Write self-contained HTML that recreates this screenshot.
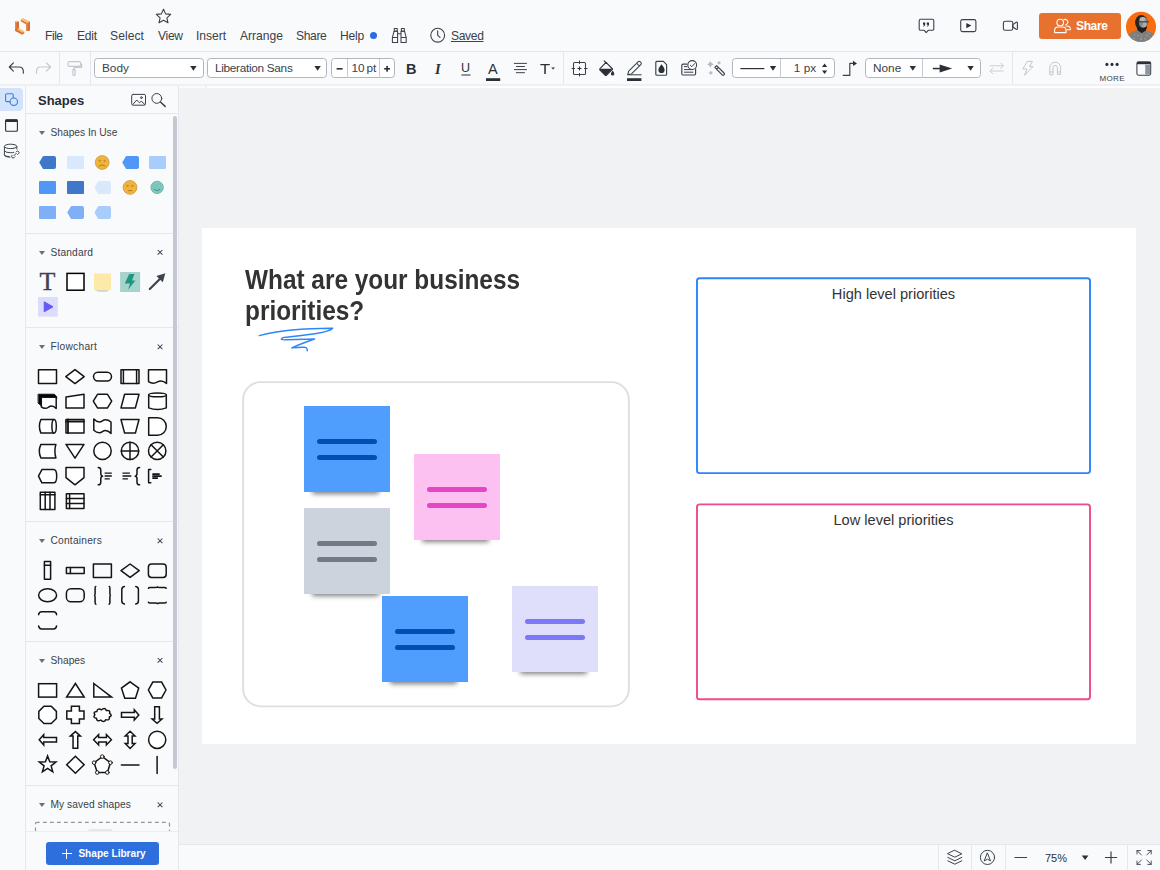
<!DOCTYPE html>
<html lang="en">
<head>
<meta charset="utf-8">
<title>Business priorities - Lucidchart</title>
<style>
*{box-sizing:border-box;margin:0;padding:0}
html,body{width:1160px;height:870px;overflow:hidden}
body{position:relative;background:#f1f2f4;font-family:"Liberation Sans",sans-serif;color:#3a414a;font-size:13px}
.abs{position:absolute}
svg{position:absolute;overflow:visible}
/* top bar */
#topbar{position:absolute;left:0;top:0;width:1160px;height:52px;background:#f9fafc;border-bottom:1px solid #e4e7eb}
#topbar .menu{position:absolute;top:29px;font-size:12.100px;line-height:15px;color:#3a414a;white-space:nowrap}
/* toolbar */
#toolbar{position:absolute;left:0;top:52px;width:1160px;height:32px;background:#f9fafc}
.sel{position:absolute;top:6px;height:20px;border:1px solid #b0b5c0;border-radius:3.5px;background:#fff;font-size:11.800px;line-height:18px;color:#3a414a;white-space:nowrap}
.vsep{position:absolute;top:0;width:1px;height:32px;background:#e4e7eb}
.caret{position:absolute;width:0;height:0;border-left:4px solid transparent;border-right:4px solid transparent;border-top:6px solid #2b3038}
/* left rail */
#rail{position:absolute;left:0;top:85px;width:26px;height:785px;background:#f9fafc;border-right:1px solid #e4e7eb}
/* shapes panel */
#panel{position:absolute;left:26px;top:85px;width:153px;height:785px;background:#f9fafc;border-right:1px solid #e4e7eb;overflow:hidden}
#panel .hdr{position:absolute;left:12px;top:7.5px;font-weight:bold;font-size:13px;line-height:16px;color:#282c33}
.sec{position:absolute;left:24.500px;font-size:10.200px;line-height:13px;color:#3a414a;white-space:nowrap}
.tri{position:absolute;left:13.200px;width:0;height:0;border-left:3px solid transparent;border-right:3px solid transparent;border-top:4.300px solid #667080}
.hr{position:absolute;left:0;width:153px;height:1px;background:#e4e7eb}
.x{position:absolute;left:130px;width:8px;height:8px}
/* canvas */
#page{position:absolute;left:202px;top:228px;width:934px;height:516px;background:#fff}
.sticky{position:absolute;width:86px;height:86px}
.sticky i{position:absolute;left:13px;width:60px;height:5.400px;border-radius:3px}
.sticky i.a{top:32.800px}.sticky i.b{top:49px}
.shadow{position:absolute;height:8px;border-radius:2px;background:rgba(0,0,0,.5);filter:blur(2.800px)}
#bottombar{position:absolute;left:179px;top:844px;width:981px;height:26px;background:#f9fafc;border-top:1px solid #e4e7eb}
</style>
</head>
<body>

<!-- ================= CANVAS ================= -->
<div class="abs" style="left:179px;top:86px;width:26px;height:2px;background:#fafbfc"></div>
<div class="abs" style="left:207px;top:86px;width:953px;height:2px;background:#fff"></div>
<div id="page">
  <div class="abs" id="title" style="left:43px;top:37px;font-weight:bold;font-size:27px;line-height:31px;color:#333;white-space:nowrap;transform:scaleX(.903);transform-origin:0 0">What are your business<br>priorities?</div>
  <svg style="left:0;top:0" width="934" height="516" viewBox="202 228 934 516"><path d="M259.3 335.600 C280 330.500 308 328.200 332.700 328.300 C329 333 306 335 284 337.400 C279.500 339 281 340 286 339.800 C296 339.600 306 339.200 314.500 339 C306 342 298 345 291.700 347.900 C296 347.500 301 347.100 304.600 347.300 C306.800 347.500 307.400 349 307.200 350.800" fill="none" stroke="#2f86f6" stroke-width="1.400" stroke-linecap="round" stroke-linejoin="round"/></svg>
  <!-- rounded container -->
  <svg style="left:0;top:0" width="934" height="516" viewBox="202 228 934 516">
    <rect x="243.100" y="382.200" width="385.800" height="324.100" rx="17.500" fill="none" stroke="#dedede" stroke-width="1.800"/>
    <rect x="697" y="278.200" width="393" height="194.900" rx="2.600" fill="none" stroke="#2b86f7" stroke-width="1.900"/>
    <rect x="697" y="504.400" width="393" height="194.900" rx="2.600" fill="none" stroke="#ee4a8c" stroke-width="1.900"/>
  </svg>
  <!-- stickies -->
  <div class="shadow" style="left:110px;top:258px;width:67px"></div>
  <div class="sticky" style="left:102px;top:178px;background:#4f9dfc"><i class="a" style="background:#0050b3"></i><i class="b" style="background:#0050b3"></i></div>
  <div class="shadow" style="left:220px;top:306px;width:67px"></div>
  <div class="sticky" style="left:212px;top:226px;background:#fdc1f1"><i class="a" style="background:#e645c3"></i><i class="b" style="background:#e645c3"></i></div>
  <div class="shadow" style="left:110px;top:360px;width:67px"></div>
  <div class="sticky" style="left:102px;top:280px;background:#ccd3dc"><i class="a" style="background:#727a87"></i><i class="b" style="background:#727a87"></i></div>
  <div class="shadow" style="left:188px;top:448px;width:67px"></div>
  <div class="sticky" style="left:180px;top:368px;background:#4f9dfc"><i class="a" style="background:#0050b3"></i><i class="b" style="background:#0050b3"></i></div>
  <div class="shadow" style="left:318px;top:438px;width:67px"></div>
  <div class="sticky" style="left:310px;top:358px;background:#dfdffc"><i class="a" style="background:#7d78f5"></i><i class="b" style="background:#7d78f5"></i></div>
  <!-- priority boxes -->
  <div class="abs" style="left:494px;top:57.500px;width:395px;text-align:center;font-size:14.600px;line-height:17px;color:#333">High level priorities</div>
  <div class="abs" style="left:494px;top:283.500px;width:395px;text-align:center;font-size:14.600px;line-height:17px;color:#333">Low level priorities</div>
</div>

<!-- ================= TOP BAR ================= -->
<div id="topbar">
  <span class="menu" style="left:45px;letter-spacing:-0.47px">File</span>
  <span class="menu" style="left:77px;letter-spacing:-0.25px">Edit</span>
  <span class="menu" style="left:110px;letter-spacing:0.07px">Select</span>
  <span class="menu" style="left:158px;letter-spacing:-0.30px">View</span>
  <span class="menu" style="left:196px;letter-spacing:-0.05px">Insert</span>
  <span class="menu" style="left:240px">Arrange</span>
  <span class="menu" style="left:296px;letter-spacing:-0.36px">Share</span>
  <span class="menu" style="left:340px;letter-spacing:-0.22px">Help</span>
  <span class="menu" style="left:451px;text-decoration:underline;text-underline-offset:1px;letter-spacing:-.36px">Saved</span>
  <div class="abs" style="left:370px;top:32px;width:7px;height:7px;border-radius:4px;background:#2d6be0"></div>
  <div class="abs" id="sharebtn" style="left:1039px;top:13px;width:82px;height:26px;border-radius:3px;background:#e87130;color:#fff;font-weight:bold;font-size:12px;line-height:26px;padding-left:37px;letter-spacing:-0.36px">Share</div>
  <svg style="left:0;top:0" width="1160" height="52" viewBox="0 0 1160 52">
    <defs>
      <linearGradient id="lg1" x1="0" y1="0" x2="1" y2="1"><stop offset="0" stop-color="#f59a4b"/><stop offset="1" stop-color="#e0641f"/></linearGradient>
      <clipPath id="avc"><circle cx="1141" cy="26.800" r="15.050"/></clipPath>
    </defs>
    <!-- logo -->
    <g>
      <path d="M15.100 21.500 H18.800 V29.800 L15.100 30.400 Z" fill="#e57a36"/>
      <path d="M17.300 21.500 H18.800 V29.800 L17.300 29.600 Z" fill="#cf682c"/>
      <ellipse cx="16.950" cy="21.500" rx="1.850" ry=".800" fill="#fbbd6e"/>
      <path d="M15.100 29.600 L17 29.200 L22.600 32.400 L24.300 31.400 V32.900 L22.500 34.700 L15.100 30.900 Z" fill="#e26b27"/>
      <path d="M16.900 29.300 L19 28.300 L24.300 31.300 L22.500 32.700 Z" fill="#fbbd6e"/>
      <path d="M26.100 22.300 L29.800 21.600 V30.200 Q28 31.500 26.100 30.900 Z" fill="#e57a36"/>
      <path d="M28.400 21.900 L29.800 21.600 V30.200 L28.400 30.800 Z" fill="#cf682c"/>
      <path d="M20.800 19.400 L26.100 22.300 V24.300 L20.800 21.300 Z" fill="#e26b27"/>
      <path d="M20.800 19.400 L22.800 17.900 L29.800 21.600 L27.800 23.200 L26.100 22.300 Z" fill="#fbbd6e"/>
    </g>
    <!-- star -->
    <path d="M163.5 9.2 L165.6 13.9 L170.7 14.4 L166.9 17.8 L168 22.8 L163.5 20.2 L159 22.8 L160.1 17.8 L156.3 14.4 L161.4 13.9 Z" fill="none" stroke="#3a414a" stroke-width="1.1" stroke-linejoin="round"/>
    <!-- binoculars -->
    <g fill="none" stroke="#3a414a" stroke-width="1.050" stroke-linejoin="round">
      <path d="M394.300 28.400 h2.900 v2.800 h-2.900 z M401.400 28.400 h2.900 v2.800 h-2.900 z"/>
      <path d="M394.100 31.200 h3.500 v11.200 h-5.200 v-5 z M401 31.200 h3.500 l1.700 6.200 v5 h-5.200 z"/>
      <path d="M392.400 37.400 h5.200 M401 37.400 h5.200 M397.600 33.800 h3.400"/>
    </g>
    <!-- clock -->
    <circle cx="437.7" cy="35.2" r="6.9" fill="none" stroke="#3a414a" stroke-width="1.1"/>
    <path d="M437.7 30.8 V35.4 L440 37.4" fill="none" stroke="#3a414a" stroke-width="1.1" stroke-linecap="round" stroke-linejoin="round"/>
    <!-- comment -->
    <path d="M920.6 19.3 h11.8 a1.4 1.4 0 0 1 1.4 1.4 v8.2 a1.4 1.4 0 0 1 -1.4 1.4 h-4.2 l-2 2.3 l-2 -2.3 h-3.6 a1.4 1.4 0 0 1 -1.4 -1.4 v-8.2 a1.4 1.4 0 0 1 1.4 -1.4 z" fill="none" stroke="#3a414a" stroke-width="1.1" stroke-linejoin="round"/>
    <path d="M923 22.6 h2.2 v2 q0 1.6 -1.7 2.1 l-0.3 -0.6 q0.9 -0.5 0.9 -1.4 h-1.1 z M926.8 22.6 h2.2 v2 q0 1.6 -1.7 2.1 l-0.3 -0.6 q0.9 -0.5 0.9 -1.4 h-1.1 z" fill="#2b3038"/>
    <!-- play -->
    <rect x="960.7" y="19.6" width="15.2" height="12" rx="1.8" fill="none" stroke="#3a414a" stroke-width="1.1"/>
    <path d="M966.3 22.9 L971.4 25.6 L966.3 28.3 Z" fill="#2b3038"/>
    <!-- video -->
    <rect x="1003.4" y="21.3" width="9.4" height="9" rx="1.8" fill="none" stroke="#3a414a" stroke-width="1.1"/>
    <path d="M1012.8 24.6 L1016.2 22.3 Q1017.4 21.8 1017.4 23 V28.6 Q1017.4 29.8 1016.2 29.3 L1012.8 27 Z" fill="none" stroke="#3a414a" stroke-width="1.1" stroke-linejoin="round"/>
    <!-- share people icon -->
    <g fill="none" stroke="#fff" stroke-width="1.1" stroke-linejoin="round">
      <circle cx="1060.2" cy="22.5" r="3.3"/>
      <path d="M1054.6 32.6 v-2.2 a3.4 3.4 0 0 1 3.4 -3.4 h4.6 a3.4 3.4 0 0 1 3.4 3.4 v2.2 z"/>
      <path d="M1063.6 20 a2.6 2.6 0 1 1 1.6 4.6"/>
      <path d="M1065.6 26 h1.4 a3.4 3.4 0 0 1 3.4 3.4 v0.4 h-4"/>
    </g>
    <!-- avatar -->
    <circle cx="1141" cy="26.800" r="15.050" fill="#f96d10"/>
    <g clip-path="url(#avc)">
      <path d="M1125 43 V36.200 L1137.200 29.600 L1141.600 32.800 L1146.200 30.200 L1157 35 V43 Z" fill="#7e7e7e"/>
      <path d="M1129 36 l2 1 M1133 38 l2 .6 M1137 35 l1.600 1.200 M1146 36 l2 -.6 M1150 37.400 l2 .4 M1140 39 l2 .4 M1134 34.600 l1.400 .8 M1148.500 33.400 l1.600 .6 M1144 38.600 l1.600 .6 M1131.500 40 l2 .4 M1152 35.200 l1.400 .6" stroke="#a8a8a8" stroke-width=".9" fill="none"/>
      <path d="M1141.400 33 v6.500" stroke="#9a9a9a" stroke-width=".7"/>
      <path d="M1137.400 27 L1146.600 27 L1146 30.600 L1141.600 33.200 L1137.400 30 Z" fill="#222"/>
      <ellipse cx="1141.300" cy="22.600" rx="6.200" ry="7.500" fill="#262626"/>
      <ellipse cx="1143.200" cy="22.400" rx="4.300" ry="5.400" fill="#858585"/>
      <ellipse cx="1142.600" cy="19.200" rx="2.900" ry="2.100" fill="#b4b4b4"/>
      <ellipse cx="1144.600" cy="24" rx="2" ry="1.400" fill="#b0b0b0"/>
      <path d="M1137 27 Q1138.500 32.400 1143 31.200 Q1146.800 30 1147.200 26.600 Q1144 29 1140.600 27.800 Z" fill="#1a1a1a"/>
      <path d="M1138.600 21.800 h10.400" stroke="#2a2a2a" stroke-width=".8"/>
      <path d="M1142 25.800 q2 1 4 0" stroke="#e0e0e0" stroke-width=".7" fill="none"/>
    </g>
  </svg>
</div>

<!-- ================= TOOLBAR ================= -->
<div id="toolbar">
  <div class="vsep" style="left:59px"></div>
  <div class="vsep" style="left:90px"></div>
  <div class="vsep" style="left:563px"></div>
  <div class="vsep" style="left:1012px"></div>
  <div class="sel" style="left:94px;width:110px;padding-left:7px">Body</div>
  <div class="sel" style="left:207px;width:120px;padding-left:7px;letter-spacing:-.3px">Liberation Sans</div>
  <div class="sel" style="left:331px;width:64px"><span class="abs" style="left:19.500px;top:0;font-size:11.800px">10</span><span class="abs" style="left:34.500px;top:0;font-size:11.800px">pt</span>
    <i class="abs" style="left:15px;top:0;width:1px;height:19px;background:#c5cad1"></i><i class="abs" style="left:47px;top:0;width:1px;height:19px;background:#c5cad1"></i></div>
  <div class="sel" style="left:731.500px;width:103px"><span class="abs" style="left:61.300px;top:0">1 px</span><i class="abs" style="left:47px;top:0;width:1px;height:19px;background:#c5cad1"></i></div>
  <div class="sel" style="left:865px;width:116px;padding-left:7px">None<i class="abs" style="left:56px;top:0;width:1px;height:19px;background:#c5cad1"></i></div>
  <span class="abs" style="left:406px;top:8.500px;font-weight:bold;font-size:14.500px;line-height:16px;color:#2b3038">B</span>
  <span class="abs" style="left:435px;top:8.500px;font-family:'Liberation Serif',serif;font-style:italic;font-weight:bold;font-size:14.500px;line-height:16px;color:#2b3038">I</span>
  <span class="abs" style="left:461px;top:9px;font-size:12.500px;line-height:14px;color:#2b3038">U</span>
  <span class="abs" style="left:488px;top:8.500px;font-size:14.500px;line-height:16px;color:#2b3038">A</span>
  <span class="abs" style="left:540.300px;top:8.800px;font-size:14px;line-height:16px;color:#2b3038;transform:scaleX(1.180);transform-origin:0 0">T</span>
  <span class="abs" style="left:1099.5px;top:22px;font-size:8px;line-height:10px;letter-spacing:.35px;color:#3a414a">MORE</span>
  <svg style="left:0;top:0" width="1160" height="33" viewBox="0 52 1160 33">
    <g fill="none" stroke="#3a414a" stroke-width="1.15" stroke-linecap="round" stroke-linejoin="round">
      <!-- undo -->
      <path d="M13.4 62.8 L9.3 67 L13.4 71.2 M9.6 67 H19 Q23.3 67 23.3 71.4 V73.2"/>
      <!-- redo (light) -->
      <path d="M46.4 62.8 L50.5 67 L46.4 71.2 M50.2 67 H40.8 Q36.5 67 36.5 71.4 V73.2" stroke="#c3c7ce"/>
      <!-- paint roller (light) -->
      <path d="M69.6 61.6 h9.4 a1.6 1.6 0 0 1 1.6 1.6 v1.6 a1.6 1.6 0 0 1 -1.6 1.6 h-9.4 a1.6 1.6 0 0 1 -1.6 -1.6 v-1.6 a1.6 1.6 0 0 1 1.6 -1.6 z M80.6 64 h1 v3.4 h-7.6 v2.2 M72.9 69.6 h2.2 v5 a1.1 1.1 0 0 1 -2.2 0 z" stroke="#c3c7ce"/>
      <!-- underline bar for U -->
      <path d="M461.8 75 h8.3" stroke="#2b3038" stroke-width="1"/>
      <!-- align -->
      <path d="M514.3 63.4 h12.2 M516.3 66.5 h8.2 M514.3 69.6 h12.2 M516.3 72.7 h8.2" stroke-width="1"/>
      <!-- shape target -->
      <rect x="573.500" y="62.500" width="12" height="12" rx="1.100" stroke-width="1.050"/>
      <path d="M579.500 60.500 v3.500 M579.500 73 v3.500 M571.500 68.500 h3.500 M584 68.500 h3.500" stroke-width="1" stroke-linecap="butt"/><path d="M577.500 68.500 h4 M579.500 66.500 v4" stroke-width="1" stroke-linecap="butt" stroke="#2b3038"/>
      <!-- pen -->
      <path d="M627.600 74.800 h13.600" stroke-width="1"/>
      <path d="M627.800 74.400 l0.900 -3.300 l9.300 -9.300 a1.600 1.600 0 0 1 2.300 0 l0.500 0.500 a1.600 1.600 0 0 1 0 2.300 l-9.300 9.300 z M636.600 63.200 l2.800 2.800" stroke-width="1.050"/>
      <!-- page with drop -->
      <path d="M656.8 61.4 h6.6 l3.2 3.2 v9.6 a1 1 0 0 1 -1 1 h-8.8 a1 1 0 0 1 -1 -1 v-11.8 a1 1 0 0 1 1 -1 z"/>
      <!-- checklist -->
      <path d="M686.6 64.2 h-3.6 a1.2 1.2 0 0 0 -1.2 1.2 v8.4 a1.2 1.2 0 0 0 1.2 1.2 h11.4 a1.2 1.2 0 0 0 1.2 -1.2 v-5"/>
      <path d="M684.4 66.6 h2.4 M684.4 69.6 h8.4 M684.4 72.2 h8.4" stroke-width="1"/>
      <circle cx="692.200" cy="65" r="4.400" fill="#f9fafc" stroke-width="1.050"/>
      <path d="M690.300 65.200 l1.500 1.500 l2.800 -3.100" stroke-width="1"/>
      <!-- wand -->
      <path d="M714.8 67.4 l1.8 -1.8 l7.4 7.4 a1.2 1.2 0 0 1 0 1.8 a1.2 1.2 0 0 1 -1.8 0 z M716.6 69.2 l1.8 -1.8"/>
      <!-- corner arrow -->
      <path d="M843.2 75.4 h6.6 v-12 h3.6"/>
      <!-- swap (light) -->
      <path d="M990 65.800 h13.400 M1000.600 63 l2.800 2.800 l-2.800 2.800 M1003.400 71 h-13.400 M992.800 68.200 l-2.800 2.800 l2.800 2.800" stroke="#cbcfd5" stroke-width="1"/>
      <!-- lightning (light) -->
      <path d="M1027.6 61.4 h4.8 l-2.8 5.2 h3.4 l-8.4 8.6 l2.4 -6.2 h-3.8 z" stroke="#c3c7ce" stroke-width="1"/>
      <!-- magnet (light) -->
      <path d="M1049.8 74.4 v-6.8 a5.4 5.4 0 0 1 10.8 0 v6.8 h-3.2 v-6.8 a2.2 2.2 0 0 0 -4.4 0 v6.8 z M1049.8 72 h3.2 M1057.4 72 h3.2" stroke="#c3c7ce" stroke-width="1"/>
      <!-- panel icon -->
      <rect x="1136.900" y="61.800" width="13.800" height="13.400" rx="1.600" stroke-width="1.050"/>
    </g>
    <!-- fills -->
    <g fill="#2b3038">
      <path d="M190.2 66 h6.4 l-3.2 4.7 z"/>
      <path d="M314.4 66 h6.4 l-3.2 4.7 z"/>
      <path d="M769.8 66 h6.4 l-3.2 4.7 z"/>
      <path d="M909.6 66 h6.4 l-3.2 4.7 z"/>
      <path d="M967.4 66 h6.4 l-3.2 4.7 z"/>
      <path d="M551.2 67.4 h3.8 l-1.9 2.2 z"/>
      <rect x="336.6" y="68" width="6" height="1.6"/>
      <rect x="384.2" y="68" width="5.8" height="1.6"/><rect x="386.3" y="65.9" width="1.6" height="5.8"/>
      <rect x="486" y="78.2" width="14.2" height="2.8"/>
      <rect x="627" y="78.2" width="14.4" height="2.8"/>
      <rect x="740.4" y="68" width="24" height="1.2"/>
      <path d="M822 67 h5.2 l-2.6 -3.4 z M822 70.6 h5.2 l-2.6 3.4 z"/>
      <path d="M853 60.8 l4 2.6 l-4 2.6 z"/>
      <rect x="932.8" y="67.8" width="9" height="1.5"/>
      <path d="M939.6 64.6 l12.6 3.9 l-12.6 3.9 z"/>
      <circle cx="1106.9" cy="64.4" r="1.55"/><circle cx="1112" cy="64.4" r="1.55"/><circle cx="1117.1" cy="64.4" r="1.55"/>
      <rect x="1137" y="62" width="13.600" height="2.200"/>
      <path d="M661.500 64.300 q3.100 3.700 3.100 5.600 a3.100 3.100 0 0 1 -6.200 0 q0 -1.900 3.100 -5.600 z"/>
      <!-- bucket -->
      <path d="M600 68.6 L606 62.4 L612.6 69 L606.6 75.2 Q605.8 75.9 605 75.2 L600 70.2 Q599.3 69.4 600 68.6 Z" fill="none" stroke="#2b3038" stroke-width="1.1" stroke-linejoin="round"/>
      <path d="M600.3 68.8 H612.4 L606.6 74.9 Q605.8 75.6 605 74.9 L600.2 70.1 Q599.7 69.4 600.3 68.8 Z"/>
      <path d="M604.2 60.8 l2.2 2.2" fill="none" stroke="#2b3038" stroke-width="1.1" stroke-linecap="round"/>
      <path d="M612.6 70.6 q1.7 2.2 1.7 3.3 a1.7 1.7 0 0 1 -3.4 0 q0 -1.1 1.7 -3.3 z"/>
    </g>
    <rect x="1145.2" y="64.6" width="4.9" height="10" fill="#8e949d"/>
    <rect x="599.4" y="78.2" width="14.6" height="2.8" fill="#fff"/>
    <!-- wand sparkles -->
    <g fill="#b4b8bf">
      <path d="M710.4 60.90 Q711.15 63.55 713.80 64.3 Q711.15 65.05 710.4 67.70 Q709.65 65.05 707.00 64.3 Q709.65 63.55 710.4 60.90 Z"/>
      <path d="M719 60.80 Q719.46 62.44 721.10 62.9 Q719.46 63.36 719 65.00 Q718.54 63.36 716.90 62.9 Q718.54 62.44 719 60.80 Z"/>
      <path d="M710.8 70.60 Q711.31 72.39 713.10 72.9 Q711.31 73.41 710.8 75.20 Q710.29 73.41 708.50 72.9 Q710.29 72.39 710.8 70.60 Z"/>
    </g>
  </svg>
</div>

<!-- ================= LEFT RAIL ================= -->
<div id="rail">
  <div class="abs" style="left:0;top:3.300px;width:23px;height:22.700px;border-radius:0 4px 4px 0;background:#d3e3fc"></div>
  <svg style="left:0;top:0" width="26" height="100" viewBox="0 85 26 100">
    <g fill="none" stroke-linejoin="round">
      <rect x="5.6" y="93.7" width="7.6" height="7.9" rx="1.2" stroke="#3b7de0" stroke-width="1.1"/>
      <circle cx="13.8" cy="101.7" r="3.7" fill="#d3e3fc" stroke="#3b7de0" stroke-width="1.1"/>
      <rect x="5.6" y="119.8" width="11.8" height="11.4" rx="1" stroke="#2b3038" stroke-width="1.1"/>
      <rect x="5.6" y="119.4" width="11.8" height="2.6" fill="#2b3038"/>
      <g stroke="#3a414a" stroke-width="1">
        <ellipse cx="10.6" cy="146.4" rx="6.2" ry="2.2"/>
        <path d="M4.400 146.4 v8.400 q0 2.2 6 2.3 M16.8 146.4 v3 M4.400 150.6 q0.400 2 6.2 2.100 q2 0 3.600 -0.400 M4.400 154.600 q0.400 2 5 2.100"/>
        <path d="M12.700 154.800 l-0.800 0.800 a1.500 1.500 0 0 0 2.100 2.100 l1.300 -1.300 M15.800 152.200 l0.800 -0.800 a1.500 1.500 0 0 1 2.100 2.100 l-1.300 1.300 M13.800 155.800 l2.700 -2.700"/>
      </g>
    </g>
  </svg>
</div>

<!-- ================= SHAPES PANEL ================= -->
<div id="panel">
  <div class="hdr">Shapes</div>
  <div class="hr" style="top:28px;width:153px"></div>
  <div class="abs" style="left:147.300px;top:30.500px;width:3.600px;height:653px;border-radius:2px;background:#c5c8d0;z-index:3"></div>

  <div class="tri" style="top:45.500px"></div><div class="sec" style="top:40.800px">Shapes In Use</div>
  <div class="hr" style="top:148px"></div>
  <div class="tri" style="top:165.600px"></div><div class="sec" style="top:160.800px;letter-spacing:.16px">Standard</div>
  <div class="hr" style="top:242px"></div>
  <div class="tri" style="top:260.100px"></div><div class="sec" style="top:255.300px;letter-spacing:.27px">Flowchart</div>
  <div class="hr" style="top:436px"></div>
  <div class="tri" style="top:454.100px"></div><div class="sec" style="top:449.300px;letter-spacing:.22px">Containers</div>
  <div class="hr" style="top:556px"></div>
  <div class="tri" style="top:573.600px"></div><div class="sec" style="top:568.800px">Shapes</div>
  <div class="hr" style="top:700px"></div>
  <div class="tri" style="top:718.100px"></div><div class="sec" style="top:713.300px;letter-spacing:.07px">My saved shapes</div>
  <svg style="left:0;top:0" width="153" height="785" viewBox="26 85 153 785"><rect x="35.500" y="822.300" width="134" height="40" rx="1.500" fill="none" stroke="#8d949e" stroke-width="1.200" stroke-dasharray="3.700 3.300" stroke-dashoffset="1"/></svg>
  <div class="abs" style="left:62px;top:743.500px;width:25px;height:6px;border-radius:3px;background:#e6e8ec"></div>
  <span class="abs" id="stdT" style="left:13.500px;top:182px;font-family:'Liberation Serif',serif;font-size:26px;line-height:30px;color:#3d4350;-webkit-text-stroke:.35px #3d4350">T</span>
  <!-- panel icon svg: global coords -->
  <svg style="left:0;top:0" width="153" height="785" viewBox="26 85 153 785">
    <!-- header icons -->
    <g fill="none" stroke="#3a414a" stroke-width="1" stroke-linejoin="round" stroke-linecap="round">
      <rect x="131.700" y="94.400" width="13.800" height="10.800" rx="1.400"/>
      <path d="M133 104.200 l3.800 -4.200 l2.600 2.800 l1.800 -1.600 l3.400 3"/>
      <circle cx="141.400" cy="97.600" r="0.900"/>
      <circle cx="156.800" cy="98.400" r="4.900"/>
      <path d="M160.400 102 l4.800 4.400" stroke-width="1.450"/>
    </g>
    <!-- close x's -->
    <g stroke="#3a414a" stroke-width="1.050" stroke-linecap="butt">
      <path d="M157.700 250.0 l4.700 4.700 M162.400 250.0 l-4.700 4.700"/>
      <path d="M157.700 344.5 l4.700 4.700 M162.400 344.5 l-4.700 4.700"/>
      <path d="M157.700 538.5 l4.700 4.700 M162.400 538.5 l-4.700 4.700"/>
      <path d="M157.700 658.0 l4.700 4.700 M162.400 658.0 l-4.700 4.700"/>
      <path d="M157.700 802.5 l4.700 4.700 M162.400 802.5 l-4.700 4.700"/>
    </g>
    <!-- Shapes in use -->
    <g>
      <path d="M39.200 162.500 L42.800 156.600 Q43.100 156 43.800 156 H54 Q56 156 56 158 V167 Q56 169 54 169 H43.800 Q43.100 169 42.800 168.400 Z" fill="#3f78c9"/>
      <rect x="67" y="156" width="17" height="13" rx="1" fill="#d9e8fd"/>
      <path d="M122.200 162.500 L125.800 156.600 Q126.100 156 126.800 156 H137 Q139 156 139 158 V167 Q139 169 137 169 H126.800 Q126.100 169 125.800 168.400 Z" fill="#5097f7"/>
      <rect x="149" y="156" width="17" height="13" rx="1" fill="#a9cdfb"/>
      <rect x="39" y="181" width="17" height="13" rx="1" fill="#5097f7"/>
      <rect x="67" y="181" width="17" height="13" rx="1" fill="#3f78c9"/>
      <path d="M94.400 187.500 L98 181.600 Q98.300 181 99 181 H109 Q111 181 111 183 V192 Q111 194 109 194 H99 Q98.300 194 98 193.400 Z" fill="#d9e8fd"/>
      <rect x="39" y="206" width="17" height="13" rx="1" fill="#7fb0f7"/>
      <path d="M67.200 212.500 L70.800 206.600 Q71.100 206 71.800 206 H82 Q84 206 84 208 V217 Q84 219 82 219 H71.800 Q71.100 219 70.800 218.400 Z" fill="#7fb0f7"/>
      <path d="M94.400 212.500 L98 206.600 Q98.300 206 99 206 H109 Q111 206 111 208 V217 Q111 219 109 219 H99 Q98.300 219 98 218.400 Z" fill="#a9cdfb"/>
      <!-- faces -->
      <circle cx="102.200" cy="162.500" r="6.900" fill="#f0b43c" stroke="#c99a3c" stroke-width=".8"/>
      <circle cx="99.800" cy="160.800" r="1.150" fill="#c08a2a"/><circle cx="104.600" cy="160.800" r="1.150" fill="#c08a2a"/>
      <path d="M98.800 166.300 q3.400 -3 6.800 0" fill="none" stroke="#b57c1c" stroke-width="1"/>
      <circle cx="130" cy="187.400" r="6.900" fill="#f0b43c" stroke="#c99a3c" stroke-width=".8"/>
      <circle cx="127.600" cy="185.800" r="1.150" fill="#c08a2a"/><circle cx="132.400" cy="185.800" r="1.150" fill="#c08a2a"/>
      <path d="M127.800 190.600 h4.400" fill="none" stroke="#b57c1c" stroke-width="1"/>
      <circle cx="157.100" cy="187.400" r="6.200" fill="#7ec8bd" stroke="#68aaa0" stroke-width=".8"/>
      <circle cx="154.900" cy="185.800" r="1.100" fill="#a8ddd5" stroke="#5fa99e" stroke-width=".5"/><circle cx="159.300" cy="185.800" r="1.100" fill="#a8ddd5" stroke="#5fa99e" stroke-width=".5"/>
      <path d="M154 189.200 q3.100 3 6.200 0" fill="none" stroke="#458f84" stroke-width="1"/>
    </g>
    <!-- Standard -->
    <g>
      <rect x="67" y="273.400" width="17" height="16.800" fill="#fff" stroke="#000" stroke-width="1.500"/>
      <ellipse cx="102.500" cy="290.600" rx="6.500" ry="1.200" fill="#cfcfcf"/>
      <rect x="94" y="273.400" width="17" height="16.800" fill="#fdeaa8"/>
      <rect x="120.100" y="272" width="20" height="20" fill="#a6d3cb"/>
      <path d="M129.200 274 H134.400 L132 280.600 H135.400 L128 289.800 L130 283.400 H124.800 Z" fill="#1f9680"/>
      <path d="M149.800 289 L160.600 278.200" stroke="#3b4250" stroke-width="2.200" stroke-linecap="round"/>
      <path d="M165.300 273.300 L162.800 282.300 L156.400 276 Z" fill="#3b4250"/>
      <rect x="38" y="297" width="19.800" height="19.600" fill="#dcdcfc"/>
      <path d="M44.200 301.800 L53 306.800 L44.200 311.800 Z" fill="#6659f5" stroke="#6659f5" stroke-width="1" stroke-linejoin="round"/>
    </g>
    <!--GEN-START-->
    <!-- Flowchart -->
    <g fill="#fff" stroke="#151515" stroke-width="1.5" stroke-linejoin="round" stroke-linecap="round">
      <rect x="38.5" y="369.8" width="18" height="13.6"/>
      <path d="M65.8 376.6 L75 369.6 L84.2 376.6 L75 383.6 Z"/>
      <rect x="93.5" y="372.2" width="18" height="8.8" rx="4.4"/>
      <rect x="121" y="369.8" width="18" height="13.6"/><path d="M123.4 369.8 v13.6 M136.6 369.8 v13.6"/>
      <path d="M148.5 369.8 H166.5 V383.4 Q162 379.4 157.5 381.8 Q153 384.6 148.5 381.6 Z"/>
      <path d="M38.400 394.200 H54.300 L56.700 396.600 V399 H41.400 V405.800 L38.400 403.400 Z" fill="#000" stroke="#000" stroke-width=".8"/><path d="M41.3 397.3 H56.2 V408.6 Q52.48 404.6 48.75 407 Q45.02 409.8 41.3 406.8 Z"/>
      <path d="M66 396.9 L84 394.3 V407.9 H66 Z"/>
      <path d="M93.3 401.1 L97.5 394.3 H107.5 L111.7 401.1 L107.5 407.9 H97.5 Z"/>
      <path d="M124.6 394.3 H139 L135.4 407.9 H121 Z"/>
      <path d="M148.7 394.9 V407.9 Q157.5 411.1 166.3 407.9 V394.9"/><ellipse cx="157.5" cy="394.9" rx="8.8" ry="1.8"/>
      <path d="M54.1 419.5 H40.9 Q37.9 426.3 40.9 433.1 H54.1"/><ellipse cx="54.1" cy="426.3" rx="2.2" ry="6.8"/>
      <rect x="66" y="419.5" width="18" height="13.6"/><path d="M68 419.5 v13.6 M66 421.5 h18" stroke-width="1.8"/>
      <path d="M93.800 419 Q96.500 421.900 99.300 421.900 C102.400 421.900 102.400 419.700 105.400 419.700 Q108.200 419.700 111 422 V433.400 Q108.200 430.600 105.400 430.600 C102.400 430.600 102.400 432.700 99.300 432.700 Q96.500 432.700 93.800 430.300 Z"/>
      <path d="M121 419.5 H139 L135.4 433.1 H124.6 Z"/>
      <path d="M148.7 417.7 H157.5 A8.8 8.8 0 0 1 157.5 435.3 H148.7 Z"/>
      <path d="M55.9 444.4 H40.9 Q37.7 451.2 40.9 458 H55.9 Q53.9 451.2 55.9 444.4 Z"/>
      <path d="M66 444.4 H84 L75 458.2 Z"/>
      <circle cx="102.5" cy="450.9" r="8.7"/>
      <circle cx="130" cy="450.9" r="8.7"/><path d="M121.3 450.9 h17.4 M130 442.2 v17.4"/>
      <circle cx="157.2" cy="450.9" r="8.7"/><path d="M151.05 444.75 l12.3 12.3 M163.35 444.75 l-12.3 12.3"/>
      <path d="M38.5 476.2 L41.9 469.6 H53.5 Q56.7 469.6 56.7 476.2 Q56.7 482.8 53.5 482.8 H41.9 Z"/>
      <path d="M66 467.4 H84 V477.6 L75 484.8 L66 477.6 Z"/>
      <path fill="none" d="M98.200 467.6 q2.600 0 2.600 2.600 v3.400 q0 2.400 1.800 2.600 q-1.800 0.200 -1.800 2.600 v3.400 q0 2.600 -2.600 2.600"/><path d="M104.600 473.2 h7.200 M104.600 476 h7.200 M104.600 478.8 h5.200" stroke-width="1.300" stroke-linecap="butt"/>
      <path fill="none" d="M139.600 467.6 q-2.600 0 -2.600 2.600 v3.400 q0 2.400 -1.800 2.600 q1.800 0.200 1.800 2.600 v3.400 q0 2.600 2.600 2.600"/><path d="M122.500 473.2 h7.400 M122.500 476 h8.800 M122.500 478.8 h5.400" stroke-width="1.300" stroke-linecap="butt"/>
      <path fill="none" d="M150.800 469.4 h-2.200 v13.400 h2.200"/><path d="M152.300 474.1 h7.400 M152.300 476.1 h9.400 M152.300 478.1 h5.600" stroke-width="1.700" stroke-linecap="butt"/>
      <rect x="40.300" y="492.2" width="14.600" height="17.400"/><path d="M45.200 492.2 v17.400 M50 492.2 v17.400 M40.300 494.8 h14.600"/>
      <rect x="66.400" y="493.8" width="17.600" height="14.600"/><path d="M66.400 498.6 h17.600 M66.400 503.4 h17.600 M69.600 493.8 v14.600"/>
    </g>
    <!-- Containers -->
    <g fill="none" stroke="#151515" stroke-width="1.5" stroke-linejoin="round" stroke-linecap="round">
      <rect x="44.400" y="561.6" width="6.200" height="17.600"/><path d="M44.400 565.3 h6.200"/>
      <rect x="66.400" y="567.6" width="17.800" height="6"/><path d="M70.400 567.6 v6"/>
      <rect x="93.400" y="564" width="18" height="13.400"/>
      <path d="M121 570.7 L130.100 564 L139.200 570.7 L130.100 577.4 Z"/>
      <rect x="148.400" y="564" width="17.800" height="13.400" rx="3.200"/>
      <ellipse cx="47.600" cy="595.3" rx="9" ry="6.500"/>
      <rect x="66.400" y="588.8" width="17.800" height="13" rx="4.600"/>
      <path d="M95.800 586.4 q-0.700 0.200 -0.700 1.600 v5.600 q0 1.300 -0.500 1.700 q0.500 0.400 0.500 1.700 v5.600 q0 1.400 0.700 1.600 M109.200 586.4 q0.700 0.200 0.700 1.600 v5.600 q0 1.300 0.500 1.700 q-0.500 0.400 -0.500 1.700 v5.600 q0 1.400 -0.700 1.600"/>
      <path d="M124.400 586.5 q-2.600 0.400 -2.600 3 v11.600 q0 2.600 2.600 3 M135.800 586.5 q2.600 0.400 2.600 3 v11.600 q0 2.600 -2.600 3"/>
      <path d="M148.400 588.3 q0.200 -0.800 2 -0.800 h4.800 q1.800 0 2.200 -0.600 q0.400 0.600 2.200 0.600 h4.600 q1.800 0 2 0.800 M148.400 602.3 q0.200 0.800 2 0.800 h4.800 q1.800 0 2.200 0.600 q0.400 -0.600 2.200 -0.600 h4.600 q1.800 0 2 -0.800"/>
      <path d="M38.600 614.7 q0.400 -3 3 -3 h12 q2.600 0 3 3 M38.600 625.9 q0.400 3 3 3 h12 q2.600 0 3 -3"/>
    </g>
    <!-- Shapes -->
    <g fill="#fff" stroke="#151515" stroke-width="1.5" stroke-linejoin="miter" stroke-linecap="round">
      <rect x="38.600" y="683.7" width="18" height="13.400"/>
      <path d="M75.400 683.5 L84.200 697.1 H66.600 Z"/>
      <path d="M93.800 683.5 L111.600 697.1 H93.800 Z"/>
      <path d="M130.1 681.8 L138.75 688.09 L135.45 698.26 L124.75 698.26 L121.45 688.09 Z"/>
      <path d="M166 690 L161.6 697.88 L152.8 697.88 L148.4 690 L152.8 682.12 L161.6 682.12 Z"/>
      <path d="M56.38 718.46 L51.24 723.49 L43.96 723.49 L38.82 718.46 L38.82 711.34 L43.96 706.31 L51.24 706.31 L56.38 711.34 Z"/>
      <path d="M71.400 706.3 h8 v4.600 h4.600 v8 h-4.600 v4.600 h-8 v-4.600 h-4.600 v-8 h4.600 z"/>
      <path d="M109.57 713.46 Q112.94 715.41 109.31 717.02 Q110.14 720.7 105.83 719.63 Q103.72 723.32 100.74 720.07 Q96.68 722.05 96.43 718.14 Q92.32 717.48 94.91 714.74 Q92.68 711.75 96.9 711.47 Q97.58 707.54 101.46 709.84 Q104.74 706.82 106.46 710.63 Q110.8 709.93 109.57 713.46 Z" stroke-linejoin="round"/>
      <path d="M121.500 712.6 H134.300 V709.8 L138.800 714.9 L134.300 720 V717.2 H121.500 Z"/>
      <path d="M154.700 706.7 H159.400 V719 H162 L157.050 723.3 L152.100 719 H154.700 Z"/>
      <path d="M56.500 737.5 H43.700 V734.7 L39.200 739.8 L43.700 744.9 V742.1 H56.500 Z"/>
      <path d="M73.050 748.2 H77.750 V735.9 H80.350 L75.400 731.6 L70.450 735.9 H73.050 Z"/>
      <path d="M93.600 739.8 L98.600 734.6 V737.6 H106.400 V734.6 L111.400 739.8 L106.400 745 V742 H98.600 V745 Z"/>
      <path d="M130.100 731.2 L135 736 H132.200 V743.4 H135 L130.100 748.4 L125.200 743.4 H128 V736 H125.200 Z"/>
      <circle cx="157.200" cy="739.8" r="8.600"/>
      <path d="M47.6 755.9 L49.77 761.71 L55.97 761.98 L51.12 765.84 L52.77 771.82 L47.6 768.4 L42.43 771.82 L44.08 765.84 L39.23 761.98 L45.43 761.71 Z"/>
      <path d="M75.400 756.2 L84.100 764.7 L75.400 773.2 L66.700 764.7 Z"/>
      <path d="M102.3 756.6 L110.48 762.68 L107.35 772.52 L97.25 772.52 L94.12 762.68 Z"/><circle cx="102.3" cy="756.6" r="1.800" fill="#fff" stroke-width="1"/><circle cx="110.48" cy="762.68" r="1.800" fill="#fff" stroke-width="1"/><circle cx="107.35" cy="772.52" r="1.800" fill="#fff" stroke-width="1"/><circle cx="97.25" cy="772.52" r="1.800" fill="#fff" stroke-width="1"/><circle cx="94.12" cy="762.68" r="1.800" fill="#fff" stroke-width="1"/>
      <path d="M121.400 765 h17.600"/>
      <path d="M157.100 756.4 v17.200"/>
    </g>
    <!--GEN-END-->
  </svg>
  <!-- footer -->
  <div class="abs" style="left:0;top:746px;width:153px;height:39px;background:#f9fafc;border-top:1px solid #eceef1"></div>
  <div class="abs" style="left:20px;top:757px;width:112.600px;height:23px;border-radius:3px;background:#2e6fde;color:#fff;font-weight:bold;font-size:10.100px;line-height:23px;padding-left:32.400px;white-space:nowrap">Shape Library</div>
  <div class="abs" style="left:36px;top:768.200px;width:9.600px;height:1.300px;background:#fff"></div>
  <div class="abs" style="left:40.150px;top:764px;width:1.300px;height:9.600px;background:#fff"></div>
</div>

<div class="abs" style="left:0;top:84px;width:1160px;height:2px;background:#eef0f3"></div>

<!-- ================= BOTTOM BAR ================= -->
<div id="bottombar">
  <span class="abs" style="left:866px;top:6.500px;font-size:11px;line-height:13px;color:#2b3038">75%</span>
  <i class="abs" style="left:758.500px;top:0;width:1px;height:26px;background:#e4e7eb"></i>
  <i class="abs" style="left:792px;top:0;width:1px;height:26px;background:#e4e7eb"></i>
  <i class="abs" style="left:826px;top:0;width:1px;height:26px;background:#e4e7eb"></i>
  <i class="abs" style="left:948px;top:0;width:1px;height:26px;background:#e4e7eb"></i>
  <svg style="left:0;top:-1px" width="981" height="26" viewBox="179 844 981 26">
    <g fill="none" stroke="#3a414a" stroke-width="1" stroke-linejoin="round" stroke-linecap="round">
      <path d="M954.800 850.400 l7 3.400 l-7 3.400 l-7 -3.400 z M947.800 857.400 l7 3.400 l7 -3.400 M947.800 860.800 l7 3.400 l7 -3.400"/>
      <circle cx="987.500" cy="857.400" r="7.100"/>
      <path d="M987.500 853.200 l3 7.600 l-3 -1.600 l-3 1.600 z"/>
      <path d="M1015 857.500 h11.600" stroke-width="1.200"/>
      <path d="M1105.400 857.500 h11.200 M1111 851.900 v11.200" stroke-width="1.200"/>
      <path d="M1137 854 v-3.400 h3.400 M1137 850.600 l4.400 4.400 M1151.200 854 v-3.400 h-3.400 M1151.200 850.600 l-4.400 4.400 M1137 861 v3.400 h3.400 M1137 864.400 l4.400 -4.400 M1151.200 861 v3.400 h-3.400 M1151.200 864.400 l-4.400 -4.400" stroke-width=".9"/>
    </g>
    <path d="M1081.800 855.400 h6.600 l-3.300 4.600 z" fill="#2b3038"/>
  </svg>
</div>

</body>
</html>
